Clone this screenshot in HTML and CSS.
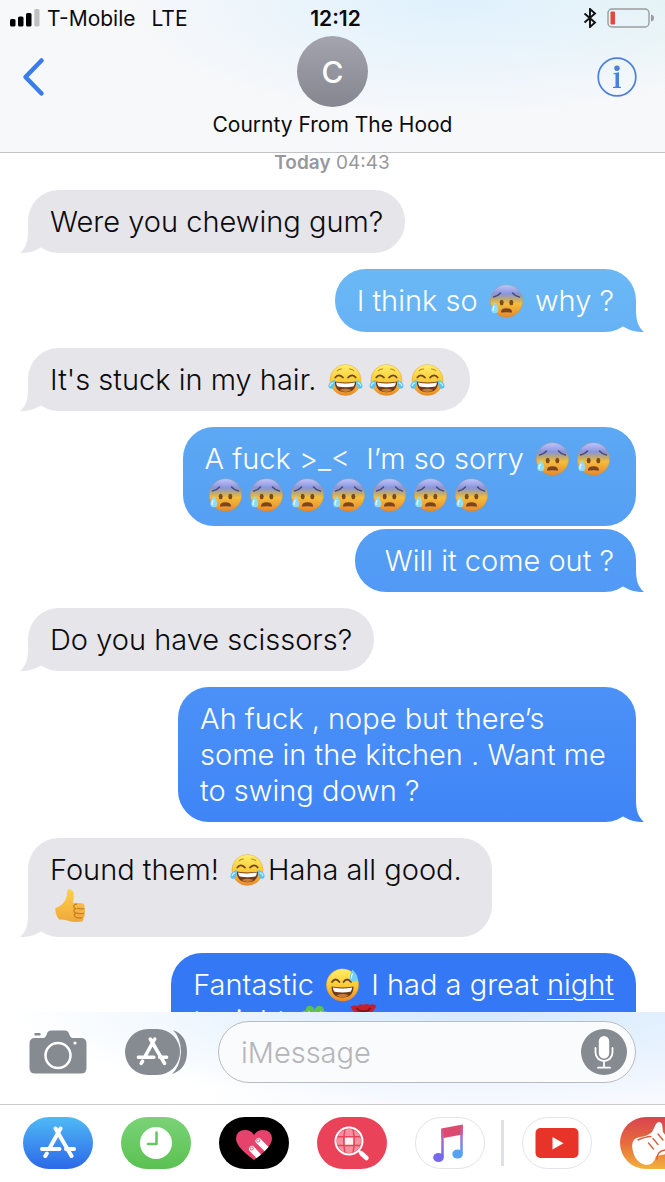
FILE: index.html
```html
<!DOCTYPE html>
<html lang="en">
<head>
<meta charset="utf-8">
<meta name="viewport" content="width=device-width, initial-scale=1">
<title>Messages</title>
<link rel="stylesheet" href="styles.css">
</head>
<body>
<svg class="defs" aria-hidden="true">
  <defs>
    <linearGradient id="gold" x1="0" y1="0" x2="0" y2="1"><stop offset="0" stop-color="#fff06a"/><stop offset=".55" stop-color="#fbc834"/><stop offset="1" stop-color="#e8892a"/></linearGradient>
    <linearGradient id="cold" x1="0" y1="0" x2="0" y2="1"><stop offset="0" stop-color="#c3c4fb"/><stop offset=".28" stop-color="#8795dc"/><stop offset=".46" stop-color="#c5ac68"/><stop offset=".58" stop-color="#f5bd3c"/><stop offset="1" stop-color="#e5892e"/></linearGradient>
    <linearGradient id="hand" x1="0" y1="0" x2="0" y2="1"><stop offset="0" stop-color="#fdd04c"/><stop offset="1" stop-color="#f0a83a"/></linearGradient>
    <linearGradient id="store" x1="0" y1="0" x2="0" y2="1"><stop offset="0" stop-color="#4fb9f6"/><stop offset="1" stop-color="#2c68e8"/></linearGradient>
    <linearGradient id="green" x1="0" y1="0" x2="0" y2="1"><stop offset="0" stop-color="#7ad377"/><stop offset="1" stop-color="#5bc152"/></linearGradient>
    <linearGradient id="band" x1="0" y1="0" x2="0" y2="1"><stop offset="0" stop-color="#d94450"/><stop offset=".5" stop-color="#e66b3c"/><stop offset="1" stop-color="#f2b23c"/></linearGradient>
    <linearGradient id="note" gradientUnits="userSpaceOnUse" x1="0" y1="8" x2="0" y2="46"><stop offset="0" stop-color="#ea4a68"/><stop offset=".35" stop-color="#b765c0"/><stop offset=".7" stop-color="#7d69ea"/><stop offset="1" stop-color="#6c6bf5"/></linearGradient>
    <linearGradient id="note2" gradientUnits="userSpaceOnUse" x1="0" y1="8" x2="0" y2="42"><stop offset="0" stop-color="#ea4a68"/><stop offset=".35" stop-color="#a471c8"/><stop offset=".75" stop-color="#579bee"/><stop offset="1" stop-color="#52a5f5"/></linearGradient>
    <clipPath id="heart"><path d="M35 43Q17 30 17 21.500 17.500 13 26 13q6 0 9 5 3-5 9-5 8.500 0 9 8.500Q53 30 35 43z"/></clipPath>
    <symbol id="e-cold" viewBox="0 0 34 34">
      <circle cx="17" cy="17" r="16.2" fill="url(#cold)" stroke="#c98a3c" stroke-opacity=".5" stroke-width=".6"/>
      <path d="M4 13q4-.5 7-4M30 13q-4-.5-7-4" fill="none" stroke="#4b4a72" stroke-width="1.5" stroke-linecap="round"/>
      <ellipse cx="12.2" cy="18.5" rx="2" ry="2.7" fill="#7c4a1d"/><ellipse cx="21.8" cy="18.5" rx="2" ry="2.7" fill="#7c4a1d"/>
      <path d="M11.5 28q0-3.800 5.500-3.800t5.500 3.800q0 1-1.500.6-4-.9-8 0-1.500.4-1.500-.6z" fill="#7c4420"/>
      <path d="M5.500 18q-3.700 5-3.700 7.800a3.500 3.500 0 0 0 7 0q0-2.800-3.300-7.800z" fill="#8edcfa"/>
      <path d="M4.800 22q-1.800 3-1 5" fill="none" stroke="#e4fbff" stroke-width="1.300"/>
    </symbol>
    <symbol id="e-joy" viewBox="0 0 36 34">
      <circle cx="18" cy="17" r="16" fill="url(#gold)" stroke="#d88a2b" stroke-opacity=".6" stroke-width=".6"/>
      <path d="M9.500 7.500q1.800-2 4.500-1.800M26.500 7.500q-1.800-2-4.500-1.800" fill="none" stroke="#c48520" stroke-width="1.100" stroke-linecap="round"/>
      <path d="M7.500 14.500q3-4.500 8 0M28.500 14.500q-3-4.500-8 0" fill="none" stroke="#6f431a" stroke-width="1.700" stroke-linecap="round"/>
      <path d="M7 18.500q11 2.200 22 0 0 11-11 11t-11-11z" fill="#713b1a"/>
      <path d="M8.300 19.500q9.700 2 19.400 0-.4 3-1.700 4.200-8 1.400-16 0-1.300-1.200-1.700-4.200z" fill="#fff"/>
      <path d="M12 27.300q6-2.800 12 0-2.500 2-6 2t-6-2z" fill="#c77d34"/>
      <path d="M7 17q-6 2-6.500 5.500-.3 3.500 3 3.500 4-.4 3.500-9zM29 17q6 2 6.500 5.500.3 3.500-3 3.500-4-.4-3.500-9z" fill="#5dc3f2"/>
      <path d="M5.500 19.500q-3.300 1.500-3.300 3.700M30.500 19.500q3.300 1.500 3.300 3.700" fill="none" stroke="#c8f2ff" stroke-width="1.200"/>
    </symbol>
    <symbol id="e-sweat" viewBox="0 0 34 34">
      <circle cx="17" cy="17" r="16.200" fill="url(#gold)" stroke="#d88a2b" stroke-opacity=".6" stroke-width=".6"/>
      <path d="M6.500 14q3.500-5 7.500 0M18 14q3.500-5 7.500 0" fill="none" stroke="#6f431a" stroke-width="1.800" stroke-linecap="round"/>
      <path d="M6 18.500q11 2 22 0 0 11-11 11t-11-11z" fill="#713b1a"/>
      <path d="M7.300 19.500q9.700 2 19.400 0-.4 3-1.700 4.200-8 1.400-16 0-1.300-1.200-1.700-4.200z" fill="#fff"/>
      <path d="M11 27.300q6-2.800 12 0-2.500 2-6 2t-6-2z" fill="#c77d34"/>
      <path d="M27 1.500q-3 5.500-2.800 8.500a3.900 3.900 0 0 0 7.800-.6q-.4-3-5-7.900z" fill="#6fcdf6"/>
      <path d="M27 5.500q-1.500 3-1 5" fill="none" stroke="#e1faff" stroke-width="1.200"/>
    </symbol>
    <symbol id="e-thumb" viewBox="0 0 34 36">
      <path d="M1 20q3-.5 7-3.500 3.500-3.500 5-8.500.2-5 .8-6.500 1-1.500 3-1 4 1 3.700 6.500 0 4-1 7.500l8 .2q4.500.3 4.500 3.500 0 1.700-1 2.300 1.700 1.200 1.500 3-.1 1.700-1.200 2.300 1 1.200.7 2.700-.3 1.600-1.700 2 .7 1 .3 2.300-.7 2-3.600 2-8 .8-12.500-1.300-5-1.500-9.500-1.300Q.5 27 1 20z" fill="url(#hand)"/>
      <path d="M24 20.500q4.500.9 8 .2M23.500 25.500q4.500 1 8.200.3M23 30q4 1 7 .4M24 16q-4 0-3.500 2.600.2 2.200 2.700 2.200-3 .5-2.600 2.700.3 2 2.600 2-2.600.6-2.200 2.500.3 2 2.200 2" fill="none" stroke="#c97b24" stroke-width="1.200"/>
    </symbol>
    <symbol id="e-clover" viewBox="0 0 34 34">
      <path d="M17 16Q5 18 3 12q-1-6 5-5.500Q9 1 13.500 2 17 3 17 6q2-5 6-4 4 1 3.500 5Q31 6.500 31 11q-1 6-14 5z" fill="#5cc24a"/>
      <path d="M17 17q-9-1-11 5t6 6q5 5 6-4 2 8 8 4 4-5-1-8-4-2-8-3z" fill="#48a838"/>
      <path d="M17 15L11 7M17 15l7-8" stroke="#a7e58c" stroke-width="1.500"/>
    </symbol>
    <symbol id="e-rose" viewBox="0 0 34 34">
      <path d="M4 3q4-3 7-1 3-3 6-1 3-2 6 0 4-2 7 1-3 4-5 8-3 6-8 6t-8-6Q7 7 4 3z" fill="#c4202a"/>
      <path d="M10 4q3 4 7 3 4 1 7-3" fill="none" stroke="#83121b" stroke-width="1.800"/>
      <path d="M17 17v16" stroke="#3d8f33" stroke-width="2.500"/>
    </symbol>
    <symbol id="store-a" viewBox="0 0 36 32">
      <path d="M20.500 2.500L10 21.500M6.800 27.500L5.300 30M15.500 2.500L31.500 30M2 23H19.500M26 23h8" fill="none" stroke="#fff" stroke-width="4" stroke-linecap="round"/>
    </symbol>
  </defs>
</svg>

<div class="app">
  <header class="header">
    <div class="status">
      <div class="status-left">
        <svg width="30" height="18" viewBox="0 0 30 18" aria-hidden="true"><rect x="0" y="10" width="5.500" height="7.500" rx="1.500"/><rect x="8" y="7.500" width="5.500" height="10" rx="1.500"/><rect x="16" y="4" width="5.500" height="13.500" rx="1.500"/><rect x="24.300" y="0" width="5.200" height="17.500" rx="1.500" fill="#bfc0c2"/></svg>
        <span>T-Mobile</span><span class="network">LTE</span>
      </div>
      <time class="clock">12:12</time>
      <div class="status-right">
        <svg width="14" height="20" viewBox="0 0 14 20" aria-hidden="true"><path d="M1.500 5.500l10.500 9L7 19V1l5 4.500-10.500 9" fill="none" stroke="#111" stroke-width="1.900"/></svg>
        <svg width="48" height="20" viewBox="0 0 48 20" aria-hidden="true"><rect x="1" y="1" width="41" height="18" rx="4" fill="none" stroke="#9a9d9f" stroke-width="1.400"/><rect x="3.500" y="3.500" width="4.500" height="13" rx="1" fill="#e4493c"/><path d="M44 6.500q3 .5 3 3.500t-3 3.500z" fill="#9a9d9f"/></svg>
      </div>
    </div>
    <div class="nav">
      <button class="icon-button back" aria-label="Back"><svg width="24" height="40" viewBox="0 0 24 40"><path d="M19.500 3.500L3.500 20l16 16.500" fill="none" stroke="#3b7ceb" stroke-width="4.500" stroke-linecap="round" stroke-linejoin="round"/></svg></button>
      <div class="avatar">C</div>
      <button class="icon-button info" aria-label="Details"><svg width="40" height="40" viewBox="0 0 40 40"><circle cx="20" cy="20" r="18.800" fill="none" stroke="#4a7fe0" stroke-width="1.700"/><circle cx="20" cy="11.200" r="2.700" fill="#4a7fe0"/><path d="M16.500 16.200l5.500-1v14.300l2 .5v1h-8v-1l2.500-.5V17.300h-2z" fill="#4a7fe0"/></svg></button>
    </div>
    <h1 class="contact">Cournty From The Hood</h1>
  </header>

  <main class="messages">
    <p class="stamp"><b>Today</b> 04:43</p>
    <p class="bubble received tail">Were you chewing gum?</p>
    <p class="bubble sent tail">I think so <svg class="emoji" role="img" aria-label="anxious face"><use href="#e-cold"/></svg> why ?</p>
    <p class="bubble received tail">It's stuck in my hair. <svg class="emoji" role="img" aria-label="joy"><use href="#e-joy"/></svg><svg class="emoji" role="img" aria-label="joy"><use href="#e-joy"/></svg><svg class="emoji" role="img" aria-label="joy"><use href="#e-joy"/></svg></p>
    <p class="bubble sent">A fuck &gt;_&lt; &nbsp;I’m so sorry <svg class="emoji" role="img" aria-label="anxious face"><use href="#e-cold"/></svg><svg class="emoji" role="img" aria-label="anxious face"><use href="#e-cold"/></svg><br><svg class="emoji" role="img" aria-label="anxious face"><use href="#e-cold"/></svg><svg class="emoji" role="img" aria-label="anxious face"><use href="#e-cold"/></svg><svg class="emoji" role="img" aria-label="anxious face"><use href="#e-cold"/></svg><svg class="emoji" role="img" aria-label="anxious face"><use href="#e-cold"/></svg><svg class="emoji" role="img" aria-label="anxious face"><use href="#e-cold"/></svg><svg class="emoji" role="img" aria-label="anxious face"><use href="#e-cold"/></svg><svg class="emoji" role="img" aria-label="anxious face"><use href="#e-cold"/></svg></p>
    <p class="bubble sent tail joined">&nbsp;Will it come out ?</p>
    <p class="bubble received tail">Do you have scissors?</p>
    <p class="bubble sent tail">Ah fuck , nope but there’s<br>some in the kitchen . Want me&nbsp;<br>to swing down ?</p>
    <p class="bubble received tail">Found them! <svg class="emoji" role="img" aria-label="joy"><use href="#e-joy"/></svg>Haha all good.&nbsp;<br><svg class="emoji" role="img" aria-label="thumbs up"><use href="#e-thumb"/></svg></p>
    <p class="bubble sent tail">Fantastic <svg class="emoji" role="img" aria-label="grinning face with sweat"><use href="#e-sweat"/></svg> I had a great <a class="event" href="#night">night</a><br>tonight <svg class="emoji" role="img" aria-label="clover"><use href="#e-clover"/></svg> <svg class="emoji" role="img" aria-label="rose"><use href="#e-rose"/></svg></p>
  </main>

  <form class="composer">
    <button type="button" class="icon-button" aria-label="Camera"><svg width="58" height="44" viewBox="0 0 58 44"><path d="M5.500 3h6v2.500h-6zM6 8h8.500q1.500 0 2.500-2l1.500-3.500Q19.500.5 22 .5h14q2.500 0 3.500 2L41 6q1 2 2.500 2H52q5.500 0 5.500 5.500V38q0 5.500-5.500 5.500H6Q.5 43.500.5 38V13.500Q.5 8 6 8z" fill="#868b92"/><circle cx="29" cy="25.500" r="12.500" fill="none" stroke="#fff" stroke-width="2.500"/><circle cx="46" cy="13" r="1.600" fill="#fff"/></svg></button>
    <button type="button" class="icon-button apps" aria-label="Apps"><svg width="62" height="46" viewBox="0 0 62 46"><path d="M48 1q14 5 14 22T47 45q8-7 9-22-.5-15-8-22z" fill="#868b92"/><rect x="0" y="0" width="55" height="46" rx="23" fill="#868b92"/><use href="#store-a" x="11.500" y="7.500" width="32" height="29"/></svg></button>
    <div class="field">
      <input type="text" placeholder="iMessage" aria-label="iMessage">
      <button type="button" class="icon-button" aria-label="Record audio"><svg width="46" height="46" viewBox="0 0 46 46"><circle cx="23" cy="23" r="23" fill="#868b92"/><rect x="17.800" y="7" width="10.400" height="22.500" rx="5.200" fill="#fff"/><path d="M14.500 19v4.500a8.500 8.500 0 0 0 17 0V19M23 32.500v6M17 38.700h12" fill="none" stroke="#fff" stroke-width="1.800" stroke-linecap="round"/></svg></button>
    </div>
  </form>

  <nav class="strip" aria-label="iMessage apps">
    <button class="icon-button" aria-label="Store"><svg width="70" height="52" viewBox="0 0 70 52"><rect width="70" height="52" rx="26" fill="url(#store)"/><use href="#store-a" x="17" y="9" width="36" height="32"/></svg></button>
    <button class="icon-button" aria-label="Recents"><svg width="70" height="52" viewBox="0 0 70 52"><rect width="70" height="52" rx="26" fill="url(#green)"/><circle cx="35" cy="26" r="16" fill="#fff"/><path d="M35.500 15.500V27h-8.500" fill="none" stroke="#66c75f" stroke-width="2.600" stroke-linecap="round" stroke-linejoin="round"/></svg></button>
    <button class="icon-button" aria-label="Digital Touch"><svg width="70" height="52" viewBox="0 0 70 52"><rect width="70" height="52" rx="26" fill="#000"/><g clip-path="url(#heart)"><path d="M15 10h40v35H15z" fill="#e6426b"/><path d="M33 32l12 13M39.500 24l14 14" stroke="#fff" stroke-width="6" stroke-linecap="round"/></g><circle cx="32.800" cy="31.500" r="1.600" fill="none" stroke="#e6426b" stroke-width=".9"/><circle cx="39.200" cy="23.500" r="1.600" fill="none" stroke="#e6426b" stroke-width=".9"/></svg></button>
    <button class="icon-button" aria-label="Images"><svg width="70" height="52" viewBox="0 0 70 52"><rect width="70" height="52" rx="26" fill="#ea4259"/><circle cx="32" cy="24" r="12" fill="#f490a0"/><path d="M28 20h8v8.500h-8z" fill="#fff0f2"/><path d="M20 19.800h24M20 28.500h24M28 12q-2.500 12 0 24M36 12q2.500 12 0 24" fill="none" stroke="#ea4259" stroke-width="1.400"/><circle cx="32" cy="24" r="13.500" fill="none" stroke="#fff" stroke-width="2"/><path d="M41.500 33.500l2.500 2.500" stroke="#fff" stroke-width="2.500"/><path d="M44.500 36.500l5 4.500" stroke="#fff" stroke-width="4.500" stroke-linecap="round"/></svg></button>
    <button class="icon-button" aria-label="Music"><svg width="70" height="52" viewBox="0 0 70 52"><rect x=".5" y=".5" width="69" height="51" rx="25.500" fill="#fff" stroke="#e3e4ea"/><path d="M26.250 11.500L47.750 7.500V17.500L28.500 21H26.250z" fill="#dc4a70"/><path d="M26.250 12h2.500v28h-2.500z" fill="url(#note)"/><path d="M45.250 8h2.500v28h-2.500z" fill="url(#note2)"/><ellipse cx="23.500" cy="40.500" rx="5.300" ry="4.600" fill="#7569ee"/><ellipse cx="42.600" cy="37" rx="5.300" ry="4.600" fill="#58a2f2"/></svg></button>
    <span class="divider"></span>
    <button class="icon-button" aria-label="YouTube"><svg width="70" height="52" viewBox="0 0 70 52"><rect x=".5" y=".5" width="69" height="51" rx="25.500" fill="#fff" stroke="#e3e4ea"/><rect x="13.500" y="11" width="43" height="30" rx="5" fill="#e83428"/><path d="M30.500 20v12.500l11-6.200z" fill="#fff"/></svg></button>
    <button class="icon-button" aria-label="GarageBand"><svg width="70" height="52" viewBox="0 0 70 52"><rect width="70" height="52" rx="26" fill="url(#band)"/><path d="M12 29q0-8 8-9 7-.5 12-5l4-8q3-4 6 0l1 8 9 12-6 10-10 2q-2 9-10 9-12-2-14-19z" fill="#fff"/><path d="M18 23q7-3.500 13-3.500M28.500 26l5 6M33 21.500l5 6M38 17l5 6M37 42q0-8 8-9" fill="none" stroke="#d9603d" stroke-width="1.400" stroke-linecap="round"/></svg></button>
  </nav>
</div>
</body>
</html>
```
FILE: styles.css
```css
* { box-sizing: border-box; }

body {
  margin: 0;
  background: #fff;
  color: #0b0b0e;
  font-family: Inter, "Liberation Sans", sans-serif;
}

.defs { position: absolute; width: 0; height: 0; }

.app {
  display: flex;
  flex-direction: column;
  height: 100vh;
  overflow: hidden;
}

.icon-button {
  display: block;
  flex: none;
  padding: 0;
  border: 0;
  background: none;
}
.icon-button svg { display: block; }

/* Header */
.header {
  flex: none;
  padding-bottom: 15px;
  border-bottom: 1px solid #c3c4c8;
  background:
    radial-gradient(ellipse 50% 80% at 68% 0, #dff1fd, rgba(223, 241, 253, 0)),
    radial-gradient(ellipse 30% 60% at 100% 0, #e9f4f2, rgba(233, 244, 242, 0)),
    #f7f8fa;
}

.status {
  display: grid;
  grid-template-columns: 1fr auto 1fr;
  align-items: center;
  height: 36px;
  padding: 0 10px;
  font-size: 21px;
}
.status-left, .status-right { display: flex; align-items: center; gap: 7px; }
.status-right { justify-content: flex-end; gap: 10px; }
.network { margin-left: 9px; }
.clock { margin-left: 6px; font-weight: 600; }

.nav {
  display: grid;
  grid-template-columns: 1fr auto 1fr;
  align-items: center;
  padding: 0 28px;
}
.back { justify-self: start; margin: 10px 0 0 -6px; }
.info { justify-self: end; margin-top: 10px; }
.avatar {
  display: grid;
  place-items: center;
  width: 71px;
  height: 71px;
  border-radius: 50%;
  background: linear-gradient(#a3a4ae, #85868f);
  color: #fff;
  font-size: 30px;
  font-weight: 500;
}
.contact {
  margin: 5px 0 0;
  font-size: 21px;
  line-height: 25px;
  font-weight: 400;
  text-align: center;
}

/* Conversation */
.messages {
  flex: 1;
  min-height: 0;
  display: flex;
  flex-direction: column;
  align-items: flex-start;
  padding: 0 29px 0 28px;
  overflow: hidden;
}
.stamp {
  align-self: center;
  margin: 0;
  color: #97989d;
  font-size: 19px;
  line-height: 20px;
}
.stamp b { font-weight: 600; }

.bubble {
  position: relative;
  flex: none;
  margin: 16px 0 0;
  padding: 14px 22px 13px;
  border-radius: 31px;
  font-size: 29px;
  font-weight: 350;
  line-height: 36px;
}
.stamp + .bubble { margin-top: 17px; }
.received { background: #e6e5ea; }
.sent {
  align-self: flex-end;
  background: linear-gradient(#6dbaf6 250px, #5aa5f3 460px, #4b91f7 690px, #3478f6 960px) fixed;
  color: #fff;
  font-weight: 300;
}
.joined { margin-top: 3px; }

.tail::after {
  content: "";
  position: absolute;
  bottom: 0;
  width: 32px;
  height: 32px;
  background: inherit;
}
.received::after {
  left: -8px;
  clip-path: path("M8 0V10C8 20 6 27 0 32C9 32 15 30 20 27L32 20V0Z");
}
.sent::after {
  right: -8px;
  clip-path: path("M24 0V10C24 20 26 27 32 32C23 32 17 30 12 27L0 20V0Z");
}

.emoji {
  width: 35px;
  height: 34px;
  margin: 0 3px;
  vertical-align: -7px;
}
.event {
  color: inherit;
  text-decoration-thickness: 1px;
  text-underline-offset: 4px;
}

/* Composer */
.composer {
  flex: none;
  display: flex;
  align-items: center;
  padding: 9px 29px 21px;
  border-bottom: 1px solid #c9cacd;
  background:
    radial-gradient(ellipse 70% 100% at 72% 0, #d5eafd, rgba(213, 234, 253, 0)),
    linear-gradient(90deg, #fff 30%, #f7f9ff 60%);
}
.apps { margin-left: 38px; }
.field {
  flex: 1;
  min-width: 0;
  display: flex;
  align-items: center;
  height: 62px;
  margin-left: 31px;
  padding: 0 8px 0 22px;
  border: 1px solid #b9bbc0;
  border-radius: 31px;
  background: #fafbfc;
}
.field input {
  flex: 1;
  min-width: 0;
  padding: 0;
  border: 0;
  outline: 0;
  background: none;
  font: inherit;
  font-size: 29px;
  font-weight: 300;
}
.field input::placeholder { color: #b4b5ba; opacity: 1; }

/* App strip */
.strip {
  flex: none;
  display: flex;
  align-items: flex-start;
  gap: 28px;
  height: 77px;
  padding: 12px 0 0 23px;
  overflow: hidden;
}
.divider {
  flex: none;
  width: 3px;
  height: 46px;
  margin: 3px -10px 0 -12px;
  background: #e0e1e6;
}
```
